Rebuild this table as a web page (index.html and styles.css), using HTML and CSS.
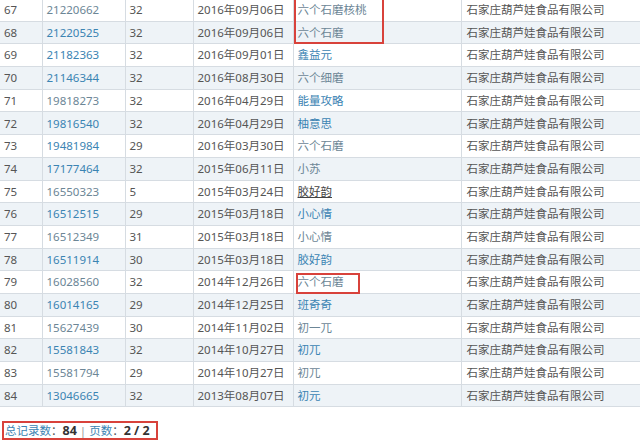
FILE: index.html
```html
<!DOCTYPE html>
<html lang="zh-CN">
<head>
  <meta charset="UTF-8" />
  <title>商标查询结果</title>
  <link rel="stylesheet" href="styles.css">
</head>
<body>
  <div class="result">
    <table class="tm-table">
      <colgroup>
        <col class="c-no" /><col class="c-reg" /><col class="c-cls" /><col class="c-date" /><col class="c-name" /><col class="c-owner" />
      </colgroup>
      <tbody>
        <tr><td>67</td><td><a class="v">21220662</a></td><td>32</td><td>2016年09月06日</td><td><a class="v">六个石磨核桃</a></td><td>石家庄葫芦娃食品有限公司</td></tr>
        <tr><td>68</td><td><a>21220525</a></td><td>32</td><td>2016年09月06日</td><td><a class="v">六个石磨</a></td><td>石家庄葫芦娃食品有限公司</td></tr>
        <tr><td>69</td><td><a>21182363</a></td><td>32</td><td>2016年09月01日</td><td><a>鑫益元</a></td><td>石家庄葫芦娃食品有限公司</td></tr>
        <tr><td>70</td><td><a>21146344</a></td><td>32</td><td>2016年08月30日</td><td><a class="v">六个细磨</a></td><td>石家庄葫芦娃食品有限公司</td></tr>
        <tr><td>71</td><td><a class="v">19818273</a></td><td>32</td><td>2016年04月29日</td><td><a>能量攻略</a></td><td>石家庄葫芦娃食品有限公司</td></tr>
        <tr><td>72</td><td><a>19816540</a></td><td>32</td><td>2016年04月29日</td><td><a>柚意思</a></td><td>石家庄葫芦娃食品有限公司</td></tr>
        <tr><td>73</td><td><a>19481984</a></td><td>29</td><td>2016年03月30日</td><td><a class="v">六个石磨</a></td><td>石家庄葫芦娃食品有限公司</td></tr>
        <tr><td>74</td><td><a>17177464</a></td><td>32</td><td>2015年06月11日</td><td><a class="v">小苏</a></td><td>石家庄葫芦娃食品有限公司</td></tr>
        <tr><td>75</td><td><a class="v">16550323</a></td><td>5</td><td>2015年03月24日</td><td><a class="hover">胶好韵</a></td><td>石家庄葫芦娃食品有限公司</td></tr>
        <tr><td>76</td><td><a>16512515</a></td><td>29</td><td>2015年03月18日</td><td><a>小心情</a></td><td>石家庄葫芦娃食品有限公司</td></tr>
        <tr><td>77</td><td><a class="v">16512349</a></td><td>31</td><td>2015年03月18日</td><td><a class="v">小心情</a></td><td>石家庄葫芦娃食品有限公司</td></tr>
        <tr><td>78</td><td><a>16511914</a></td><td>30</td><td>2015年03月18日</td><td><a>胶好韵</a></td><td>石家庄葫芦娃食品有限公司</td></tr>
        <tr><td>79</td><td><a class="v">16028560</a></td><td>32</td><td>2014年12月26日</td><td><a class="v">六个石磨</a></td><td>石家庄葫芦娃食品有限公司</td></tr>
        <tr><td>80</td><td><a>16014165</a></td><td>29</td><td>2014年12月25日</td><td><a>班奇奇</a></td><td>石家庄葫芦娃食品有限公司</td></tr>
        <tr><td>81</td><td><a class="v">15627439</a></td><td>30</td><td>2014年11月02日</td><td><a class="v">初一兀</a></td><td>石家庄葫芦娃食品有限公司</td></tr>
        <tr><td>82</td><td><a>15581843</a></td><td>32</td><td>2014年10月27日</td><td><a>初兀</a></td><td>石家庄葫芦娃食品有限公司</td></tr>
        <tr><td>83</td><td><a class="v">15581794</a></td><td>29</td><td>2014年10月27日</td><td><a class="v">初兀</a></td><td>石家庄葫芦娃食品有限公司</td></tr>
        <tr><td>84</td><td><a>13046665</a></td><td>32</td><td>2013年08月07日</td><td><a>初元</a></td><td>石家庄葫芦娃食品有限公司</td></tr>
      </tbody>
    </table>

    <!-- 标注框 -->
    <div class="mark mark-1"></div>
    <div class="mark mark-2"></div>

    <div class="pager">
      <span class="pager-box">
        <a>总记录数</a>：<b>84</b> <span class="sep">|</span> <a>页数</a>：<b>2 / 2</b>
      </span>
    </div>
  </div>
</body>
</html>
```

FILE: styles.css
```css
:root {
  --text: #555;
  --link: #3b84b3;
  --link-visited: #6c8696;
  --border: #d6dce2;
  --row-alt: #eef3f7;
  --mark: #d8423b;
}

* {
  box-sizing: border-box;
}

body {
  margin: 0;
  background: #fff;
  color: var(--text);
  font-family: "Noto Sans", "Noto Sans CJK SC", sans-serif;
  font-size: 11.5px;
  overflow: hidden;
}

.result {
  position: relative;
  width: 640px;
  overflow: hidden;
}

.tm-table {
  width: 660px;
  margin-top: -2px;
  border-collapse: collapse;
  table-layout: fixed;
}

.c-no { width: 42px; }
.c-reg { width: 83px; }
.c-cls { width: 68px; }
.c-date { width: 100px; }
.c-name { width: 168px; }
.c-owner { width: 199px; }

.tm-table td {
  height: 22.7px;
  padding: 0 4px;
  border: 1px solid var(--border);
  white-space: nowrap;
  line-height: 1;
}

.tm-table td:first-child {
  border-left: none;
}

.tm-table td:last-child {
  padding-left: 5px;
}

.tm-table tr:nth-child(even) td {
  background: var(--row-alt);
}

.tm-table a {
  color: var(--link);
  text-decoration: none;
}

.tm-table a.v {
  color: var(--link-visited);
}

.tm-table a.hover {
  color: #444;
  text-decoration: underline;
}

.mark {
  position: absolute;
  border: 2px solid var(--mark);
}

.mark-1 {
  left: 294px;
  top: -2px;
  width: 90px;
  height: 46px;
}

.mark-2 {
  left: 296px;
  top: 273px;
  width: 64px;
  height: 21px;
}

.pager {
  padding: 14px 0 6px 2px;
}

.pager-box {
  display: inline-block;
  height: 19px;
  padding: 0 6px 0 1px;
  border: 2px solid var(--mark);
  line-height: 15px;
  font-size: 11.5px;
}

.pager-box a {
  color: var(--link);
}

.pager-box b {
  color: #333;
  font-size: 12.5px;
}

.pager-box .sep {
  color: #999;
}
```
